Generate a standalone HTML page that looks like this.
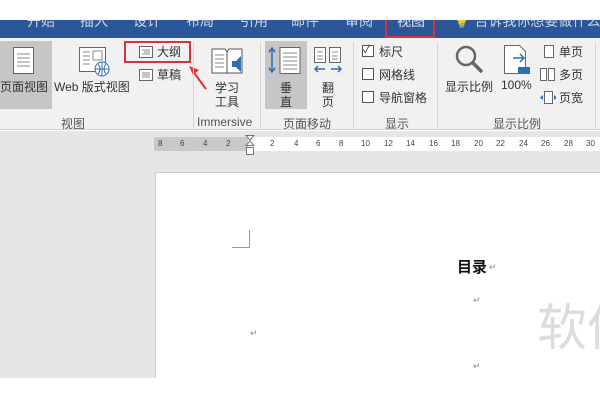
<!DOCTYPE html>
<html><head><meta charset="utf-8"><style>
*{margin:0;padding:0;box-sizing:border-box}
body{width:600px;height:400px;position:relative;overflow:hidden;background:#fff;font-family:"Liberation Sans","Noto Sans CJK SC",sans-serif;font-size:12px;color:#333}
#w{position:absolute;left:0;top:0;width:600px;height:400px;overflow:hidden}
.a{position:absolute;white-space:nowrap}
.tab{color:#c9d6ea;font-size:14px;top:11px}
.lbl{color:#555;font-size:12px}
.sep{position:absolute;width:1px;background:#d6d6d6;top:42px;height:86px}
.cb{position:absolute;width:12px;height:12px;border:1px solid #555;background:#fff}
.rn{position:absolute;top:139px;font-size:8px;color:#444}
.ret{position:absolute;font-size:9px;color:#888}
</style></head><body><div id="w">
<div class="a" style="left:0;top:20px;width:600px;height:18px;background:#2b579a"></div>
<div class="a tab" style="left:27px">开始</div>
<div class="a tab" style="left:80px">插入</div>
<div class="a tab" style="left:133px">设计</div>
<div class="a tab" style="left:186px">布局</div>
<div class="a tab" style="left:240px">引用</div>
<div class="a tab" style="left:291px">邮件</div>
<div class="a tab" style="left:345px">审阅</div>
<div class="a" style="left:385px;top:14px;width:50px;height:24px;border:2px solid #d9333a;background:#2b579a"></div>
<div class="a tab" style="left:397px;color:#e0e7f2">视图</div>
<div class="a tab" style="left:453px">💡 告诉我你想要做什么</div>
<div class="a" style="left:0;top:0;width:600px;height:20px;background:#fff"></div>
<div class="a" style="left:0;top:38px;width:600px;height:92px;background:#f1f1f1;border-bottom:1px solid #d4d4d4"></div>
<div class="a" style="left:0;top:41px;width:52px;height:68px;background:#c6c6c6"></div>
<svg class="a" style="left:12px;top:46px" width="24" height="30"><rect x="1.5" y="1.5" width="20" height="26" fill="#fff" stroke="#666"/><g stroke="#888"><line x1="5" y1="8" x2="18" y2="8"/><line x1="5" y1="12" x2="18" y2="12"/><line x1="5" y1="16" x2="18" y2="16"/><line x1="5" y1="20" x2="18" y2="20"/></g></svg>
<div class="a" style="left:0;top:78px;font-size:12px;color:#333">页面视图</div>
<svg class="a" style="left:78px;top:46px" width="34" height="32"><rect x="1.5" y="1.5" width="26" height="24" fill="#fff" stroke="#666"/><rect x="15" y="5" width="9" height="9" fill="none" stroke="#888"/><g stroke="#888"><line x1="5" y1="6" x2="12" y2="6"/><line x1="5" y1="10" x2="12" y2="10"/><line x1="5" y1="14" x2="12" y2="14"/><line x1="5" y1="18" x2="12" y2="18"/></g><circle cx="24" cy="23" r="7" fill="#fff" stroke="#2f6db5"/><path d="M17 23h14M24 16v14M20 18q4 5 0 10M28 18q-4 5 0 10" stroke="#2f6db5" fill="none"/></svg>
<div class="a" style="left:54px;top:78px">Web 版式视图</div>
<div class="a" style="left:124px;top:41px;width:67px;height:22px;border:2px solid #d9333a"></div>
<svg class="a" style="left:139px;top:46px" width="14" height="12"><rect x=".5" y=".5" width="13" height="11" fill="#fff" stroke="#666"/><g stroke="#888"><line x1="3" y1="4" x2="11" y2="4"/><line x1="5" y1="6" x2="11" y2="6"/><line x1="3" y1="8" x2="11" y2="8"/></g></svg>
<div class="a" style="left:157px;top:43px">大纲</div>
<svg class="a" style="left:139px;top:69px" width="14" height="12"><rect x=".5" y=".5" width="13" height="11" fill="#fff" stroke="#666"/><g stroke="#888"><line x1="3" y1="4" x2="11" y2="4"/><line x1="3" y1="6" x2="11" y2="6"/><line x1="3" y1="8" x2="11" y2="8"/></g></svg>
<div class="a" style="left:157px;top:66px">草稿</div>
<svg class="a" style="left:186px;top:64px" width="24" height="28"><path d="M20 25L6 6" stroke="#e03030" stroke-width="2"/><path d="M3 2l10 4-6 5z" fill="#e03030"/></svg>
<div class="a lbl" style="left:61px;top:115px">视图</div>
<div class="sep" style="left:193px"></div>
<svg class="a" style="left:210px;top:45px" width="34" height="34"><path d="M2 4h13l2 3 2-3h13v24H2z" fill="#fff" stroke="#555"/><line x1="17" y1="7" x2="17" y2="28" stroke="#555"/><g stroke="#888"><line x1="5" y1="10" x2="14" y2="10"/><line x1="5" y1="14" x2="14" y2="14"/><line x1="5" y1="18" x2="14" y2="18"/><line x1="5" y1="22" x2="14" y2="22"/></g><path d="M22 16h4l5-5v16l-5-5h-4z" fill="#2f6db5"/></svg>
<div class="a" style="left:215px;top:79px">学习</div>
<div class="a" style="left:215px;top:93px">工具</div>
<div class="a lbl" style="left:197px;top:115px">Immersive</div>
<div class="sep" style="left:260px"></div>
<div class="a" style="left:265px;top:41px;width:42px;height:68px;background:#c6c6c6"></div>
<svg class="a" style="left:268px;top:46px" width="36" height="30"><path d="M4 2v24M1 6l3-4 3 4M1 22l3 4 3-4" stroke="#2f6db5" fill="none" stroke-width="1.5"/><rect x="12" y="1.5" width="20" height="26" fill="#fff" stroke="#666"/><g stroke="#888"><line x1="15" y1="7" x2="29" y2="7"/><line x1="15" y1="11" x2="29" y2="11"/><line x1="15" y1="15" x2="29" y2="15"/><line x1="15" y1="19" x2="29" y2="19"/><line x1="15" y1="23" x2="29" y2="23"/></g></svg>
<div class="a" style="left:280px;top:79px">垂</div>
<div class="a" style="left:280px;top:93px">直</div>
<svg class="a" style="left:313px;top:46px" width="30" height="30"><rect x="1.5" y="1.5" width="11" height="15" fill="#fff" stroke="#666"/><rect x="16.5" y="1.5" width="11" height="15" fill="#fff" stroke="#666"/><g stroke="#888"><line x1="4" y1="6" x2="10" y2="6"/><line x1="4" y1="10" x2="10" y2="10"/><line x1="4" y1="13" x2="10" y2="13"/><line x1="19" y1="6" x2="25" y2="6"/><line x1="19" y1="10" x2="25" y2="10"/><line x1="19" y1="13" x2="25" y2="13"/></g><path d="M2 23h10M5 20l-3 3 3 3M18 23h10M25 20l3 3-3 3" stroke="#2f6db5" stroke-width="1.5" fill="none"/></svg>
<div class="a" style="left:322px;top:79px">翻</div>
<div class="a" style="left:322px;top:93px">页</div>
<div class="a lbl" style="left:283px;top:115px">页面移动</div>
<div class="sep" style="left:353px"></div>
<div class="cb" style="left:362px;top:45px"></div><div class="a" style="left:363px;top:41px;font-size:11px">✓</div>
<div class="a" style="left:379px;top:43px">标尺</div>
<div class="cb" style="left:362px;top:68px"></div><div class="a" style="left:379px;top:66px">网格线</div>
<div class="cb" style="left:362px;top:91px"></div><div class="a" style="left:379px;top:89px">导航窗格</div>
<div class="a lbl" style="left:385px;top:115px">显示</div>
<div class="sep" style="left:437px"></div>
<svg class="a" style="left:454px;top:44px" width="32" height="32"><circle cx="12" cy="12" r="9" fill="none" stroke="#666" stroke-width="2.5"/><line x1="18" y1="18" x2="28" y2="28" stroke="#666" stroke-width="3.5"/></svg>
<div class="a" style="left:445px;top:78px">显示比例</div>
<svg class="a" style="left:503px;top:44px" width="28" height="32"><path d="M1.5 1.5h15l6 6v22h-21z" fill="#fff" stroke="#666"/><path d="M10 14h11M17 10l4 4-4 4" stroke="#2f6db5" stroke-width="1.5" fill="none"/><rect x="15" y="23" width="12" height="7" fill="#2f6db5"/></svg>
<div class="a" style="left:501px;top:78px">100%</div>
<svg class="a" style="left:544px;top:45px" width="10" height="13"><rect x=".5" y=".5" width="9" height="12" fill="#fff" stroke="#666"/></svg>
<div class="a" style="left:559px;top:43px">单页</div>
<svg class="a" style="left:540px;top:68px" width="16" height="13"><rect x=".5" y=".5" width="6" height="12" fill="#fff" stroke="#666"/><rect x="8.5" y=".5" width="6" height="12" fill="#fff" stroke="#666"/></svg>
<div class="a" style="left:559px;top:66px">多页</div>
<svg class="a" style="left:540px;top:91px" width="16" height="13"><rect x="4.5" y=".5" width="8" height="12" fill="#fff" stroke="#666"/><path d="M3 4L0 6.5 3 9M14 4l3 2.5-3 2.5" fill="#2f6db5"/></svg>
<div class="a" style="left:559px;top:89px">页宽</div>
<div class="a lbl" style="left:493px;top:115px">显示比例</div>
<div class="sep" style="left:595px"></div>
<div class="a" style="left:0;top:131px;width:600px;height:247px;background:#e6e6e6"></div>
<div class="a" style="left:154px;top:137px;width:446px;height:14px;background:#fff"></div>
<div class="a" style="left:154px;top:137px;width:94px;height:14px;background:#c8c8c8"></div>
<div class="rn" style="left:158px">8</div><div class="rn" style="left:180px">6</div><div class="rn" style="left:203px">4</div><div class="rn" style="left:226px">2</div>
<div class="rn" style="left:270px">2</div><div class="rn" style="left:294px">4</div><div class="rn" style="left:316px">6</div><div class="rn" style="left:339px">8</div><div class="rn" style="left:361px">10</div><div class="rn" style="left:384px">12</div><div class="rn" style="left:406px">14</div><div class="rn" style="left:429px">16</div><div class="rn" style="left:451px">18</div><div class="rn" style="left:474px">20</div><div class="rn" style="left:496px">22</div><div class="rn" style="left:519px">24</div><div class="rn" style="left:541px">26</div><div class="rn" style="left:564px">28</div><div class="rn" style="left:586px">30</div>
<svg class="a" style="left:245px;top:135px" width="10" height="24"><path d="M1 .5h8L5 5z M1 10.5h8L5 6z" fill="#fff" stroke="#777"/><rect x="1.5" y="12.5" width="7" height="7" fill="#fff" stroke="#777"/></svg>
<div class="a" style="left:155px;top:172px;width:445px;height:206px;background:#fff;border-left:1px solid #ccc;border-top:1px solid #ccc;overflow:hidden">
<div class="a" style="left:381px;top:115px;font-size:50px;color:#dcdcdc">软件</div>
</div>
<div class="a" style="left:232px;top:230px;width:18px;height:18px;border-right:1px solid #999;border-bottom:1px solid #999"></div>
<div class="a" style="left:457px;top:256px;font-size:15px;font-weight:bold;color:#111">目录</div>
<div class="ret" style="left:489px;top:262px">↵</div>
<div class="ret" style="left:473px;top:295px">↵</div>
<div class="ret" style="left:250px;top:328px">↵</div>
<div class="ret" style="left:473px;top:361px">↵</div>
</div></body></html>
